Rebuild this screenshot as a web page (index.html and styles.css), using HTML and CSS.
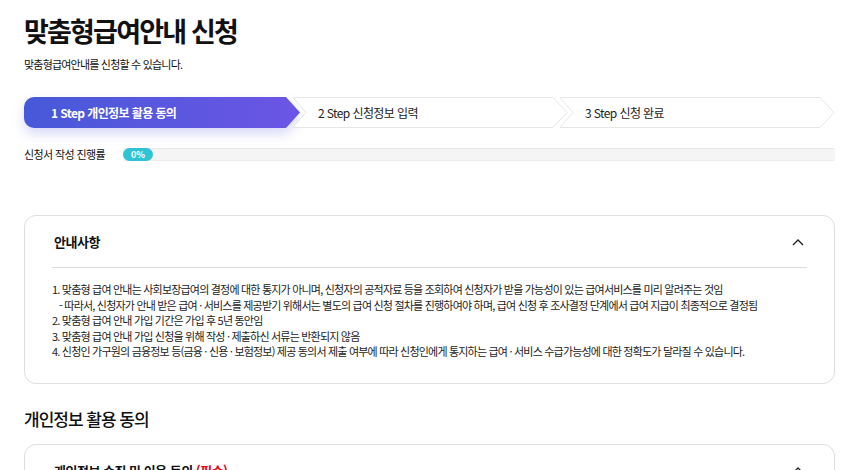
FILE: index.html
```html
<!DOCTYPE html>
<html lang="ko">
<head>
    <meta charset="UTF-8">
    <meta name="viewport" content="width=device-width, initial-scale=1.0">
    <title>맞춤형급여안내 신청</title>
    <link rel="stylesheet" href="styles.css">
</head>
<body>
    <div class="container">
        <h1 class="page-title">맞춤형급여안내 신청</h1>
        <p class="page-desc">맞춤형급여안내를 신청할 수 있습니다.</p>

        <div class="steps">
            <div class="step active">
                <svg class="step-bg" viewBox="0 0 277 31" preserveAspectRatio="none">
                    <defs>
                        <linearGradient id="stepGrad" x1="0" y1="0" x2="1" y2="0">
                            <stop offset="0" stop-color="#4659d8"/>
                            <stop offset="1" stop-color="#6c55e6"/>
                        </linearGradient>
                    </defs>
                    <path d="M10,0 H262 L276,15.5 L262,31 H10 A10,10 0 0 1 0,21 V10 A10,10 0 0 1 10,0 Z" fill="url(#stepGrad)"/>
                </svg>
                <span class="step-text">1 Step 개인정보 활용 동의</span>
            </div>
            <div class="step">
                <svg class="step-bg" viewBox="0 0 277 31" preserveAspectRatio="none">
                    <path d="M2,0.5 H262 L276,15.5 L262,30.5 H2 L15,15.5 Z" fill="#fff" stroke="#e6e6e6" stroke-linejoin="round"/>
                </svg>
                <span class="step-text">2 Step 신청정보 입력</span>
            </div>
            <div class="step">
                <svg class="step-bg" viewBox="0 0 277 31" preserveAspectRatio="none">
                    <path d="M2,0.5 H262 L276,15.5 L262,30.5 H2 L15,15.5 Z" fill="#fff" stroke="#e6e6e6" stroke-linejoin="round"/>
                </svg>
                <span class="step-text">3 Step 신청 완료</span>
            </div>
        </div>

        <div class="progress-row">
            <span class="progress-label">신청서 작성 진행률</span>
            <div class="progress-bar">
                <span class="progress-fill">0%</span>
            </div>
        </div>

        <div class="card">
            <div class="card-head">
                <h3>안내사항</h3>
                <svg class="chevron" viewBox="0 0 12 8" width="12" height="8">
                    <path d="M1,7 L6,2 L11,7" fill="none" stroke="#222" stroke-width="1.4"/>
                </svg>
            </div>
            <ul class="notice">
                <li>1. 맞춤형 급여 안내는 사회보장급여의 결정에 대한 통지가 아니며, 신청자의 공적자료 등을 조회하여 신청자가 받을 가능성이 있는 급여서비스를 미리 알려주는 것임</li>
                <li class="sub">- 따라서, 신청자가 안내 받은 급여 · 서비스를 제공받기 위해서는 별도의 급여 신청 절차를 진행하여야 하며, 급여 신청 후 조사결정 단계에서 급여 지급이 최종적으로 결정됨</li>
                <li>2. 맞춤형 급여 안내 가입 기간은 가입 후 5년 동안임</li>
                <li>3. 맞춤형 급여 안내 가입 신청을 위해 작성 · 제출하신 서류는 반환되지 않음</li>
                <li>4. 신청인 가구원의 금융정보 등(금융 · 신용 · 보험정보) 제공 동의서 제출 여부에 따라 신청인에게 통지하는 급여 · 서비스 수급가능성에 대한 정확도가 달라질 수 있습니다.</li>
            </ul>
        </div>

        <h2 class="section-title">개인정보 활용 동의</h2>

        <div class="card">
            <div class="card-head">
                <h3>개인정보 수집 및 이용 동의 <span class="required">(필수)</span></h3>
                <svg class="chevron" viewBox="0 0 12 8" width="12" height="8">
                    <path d="M1,7 L6,2 L11,7" fill="none" stroke="#222" stroke-width="1.4"/>
                </svg>
            </div>
        </div>
    </div>
</body>
</html>
```

FILE: styles.css
```css
* {
    box-sizing: border-box;
}
body {
    margin: 0;
    font-family: "Noto Sans CJK KR", "Noto Sans", sans-serif;
    color: #111;
    background: #fff;
}
.container {
    padding: 12px 31px 0 24px;
}
.page-title {
    margin: 0;
    font-size: 27px;
    font-weight: 700;
    letter-spacing: -1.8px;
    line-height: 38px;
}
.page-desc {
    margin: 6px 0 0;
    font-size: 11px;
    letter-spacing: -0.8px;
    line-height: 16px;
}
.steps {
    display: flex;
    margin-top: 25px;
    height: 31px;
}
.step {
    position: relative;
    flex: 1;
    display: flex;
    align-items: center;
    padding-left: 27px;
}
.step + .step {
    margin-left: -10px;
}
.step-bg {
    position: absolute;
    top: 0;
    left: 0;
    width: 100%;
    height: 100%;
}
.step.active .step-bg {
    filter: drop-shadow(0 6px 6px rgba(80, 80, 220, 0.22));
}
.step-text {
    position: relative;
    font-size: 12px;
    letter-spacing: -0.6px;
    color: #222;
}
.step.active .step-text {
    color: #fff;
    font-weight: 700;
}
.progress-row {
    display: flex;
    align-items: center;
    margin-top: 18px;
}
.progress-label {
    width: 99px;
    font-size: 11px;
    letter-spacing: -0.6px;
}
.progress-bar {
    flex: 1;
    height: 13px;
    background: #f5f5f5;
    border-top: 1px solid #e6e6e6;
    border-bottom: 1px solid #ececec;
    border-radius: 2px;
    display: flex;
}
.progress-fill {
    width: 30px;
    margin-top: -1px;
    height: 13px;
    background: #2ec4d6;
    border-radius: 7px;
    color: #fff;
    font-size: 9px;
    font-weight: 700;
    line-height: 13px;
    text-align: center;
}
.card {
    margin-top: 53px;
    border: 1px solid #dedede;
    border-radius: 12px;
    padding: 0 27px 23px 27px;
}
.card-head {
    display: flex;
    align-items: center;
    justify-content: space-between;
    height: 52px;
    border-bottom: 1px solid #dcdcdc;
    padding-left: 2px;
    padding-right: 3px;
}
.card-head h3 {
    margin: 0;
    font-size: 13px;
    font-weight: 700;
    letter-spacing: -0.5px;
}
.required {
    color: #e60012;
}
.chevron {
    display: block;
}
.notice {
    list-style: none;
    margin: 14px 0 0;
    padding: 0;
    font-size: 11px;
    line-height: 15.6px;
    letter-spacing: -0.8px;
    color: #222;
}
.notice .sub {
    padding-left: 7px;
}
.section-title {
    margin: 22px 0 0;
    font-size: 17px;
    font-weight: 500;
    letter-spacing: -1px;
    line-height: 26px;
}
.section-title + .card {
    margin-top: 12px;
}
```
